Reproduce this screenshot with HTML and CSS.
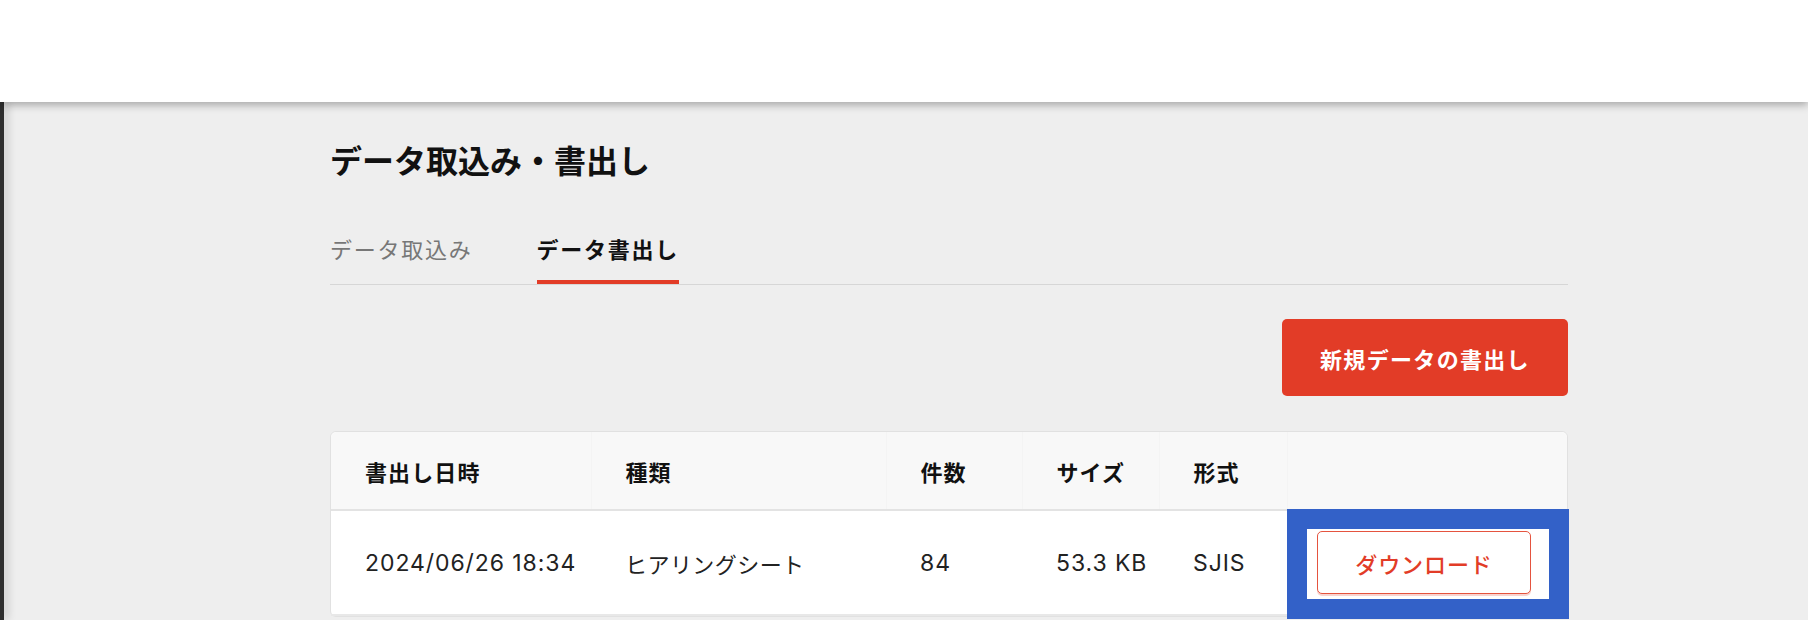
FILE: index.html
```html
<!DOCTYPE html>
<html lang="ja">
<head>
  <meta charset="UTF-8">
  <meta name="viewport" content="width=device-width, initial-scale=1.0">
  <title>データ取込み・書出し</title>
  <link rel="stylesheet" href="styles.css">
</head>
<body>
  <header class="topbar"></header>
  <div class="layout">
    <aside class="sidebar"></aside>
    <main class="main">
      <div class="content">
        <h1 class="page-title">データ取込み・書出し</h1>

        <nav class="tabs">
          <a class="tab" href="#">データ取込み</a>
          <a class="tab active" href="#">データ書出し</a>
        </nav>

        <div class="toolbar">
          <button class="btn-primary" type="button">新規データの書出し</button>
        </div>

        <div class="table-card">
          <table class="export-table">
            <colgroup>
              <col class="col-date">
              <col class="col-type">
              <col class="col-count">
              <col class="col-size">
              <col class="col-format">
              <col>
            </colgroup>
            <thead>
              <tr>
                <th>書出し日時</th>
                <th>種類</th>
                <th>件数</th>
                <th>サイズ</th>
                <th>形式</th>
                <th></th>
              </tr>
            </thead>
            <tbody>
              <tr>
                <td class="num">2024/06/26 18:34</td>
                <td>ヒアリングシート</td>
                <td class="num">84</td>
                <td class="num">53.3 KB</td>
                <td class="num">SJIS</td>
                <td class="cell-action">
                  <span class="highlight"></span>
                  <button class="btn-outline" type="button">ダウンロード</button>
                </td>
              </tr>
            </tbody>
          </table>
        </div>
      </div>
    </main>
  </div>
</body>
</html>
```

FILE: styles.css
```css
html, body {
  margin: 0;
  height: 100%;
}
body {
  font-family: "Inter", "Noto Sans CJK JP", sans-serif;
  background: #eeeeee;
  color: #1a1a1a;
  overflow: hidden;
}
.topbar {
  height: 102px;
  background: #fff;
  position: relative;
  z-index: 2;
  box-shadow: 0 3px 8px rgba(0, 0, 0, 0.3);
}
.layout {
  display: flex;
  min-height: calc(100vh - 102px);
}
.sidebar {
  width: 4px;
  flex-shrink: 0;
  background: #2e2e2e;
  box-shadow: 3px 0 8px rgba(0, 0, 0, 0.25);
}
.main {
  flex: 1;
  padding: 38px 0 0 326px;
}
.content {
  width: 1238px;
}
.page-title {
  margin: 0;
  font-size: 32px;
  line-height: 44px;
  font-weight: 700;
  color: #111;
}
.tabs {
  display: flex;
  gap: 64px;
  margin-top: 50px;
  border-bottom: 1px solid #d6d6d6;
}
.tab {
  display: block;
  font-size: 22px;
  line-height: 32px;
  letter-spacing: 0.08em;
  color: #777;
  text-decoration: none;
  padding-bottom: 14px;
  border-bottom: 4px solid transparent;
}
.tab.active {
  color: #111;
  font-weight: 700;
  border-bottom-color: #e23c27;
}
.toolbar {
  display: flex;
  justify-content: flex-end;
  margin-top: 34px;
}
.btn-primary {
  width: 286px;
  height: 77px;
  background: #e23c27;
  color: #fff;
  border: none;
  border-radius: 5px;
  font-family: inherit;
  font-size: 22px;
  font-weight: 700;
  letter-spacing: 0.06em;
  cursor: pointer;
}
.table-card {
  margin-top: 35px;
  background: #fff;
  border: 1px solid #e1e1e1;
  border-radius: 6px;
}
.export-table {
  width: 100%;
  border-collapse: collapse;
  table-layout: fixed;
}
.col-date { width: 260px; }
.col-type { width: 295px; }
.col-count { width: 136px; }
.col-size { width: 137px; }
.col-format { width: 128px; }
.export-table th,
.export-table td {
  text-align: left;
  padding: 0 0 0 34px;
  font-size: 22px;
  letter-spacing: 0.05em;
}
.export-table th {
  height: 77px;
  background: #f8f8f8;
  font-weight: 700;
  color: #111;
  border-bottom: 2px solid #e3e3e3;
}
.export-table th + th {
  border-left: 1px solid #f4f4f4;
}
.export-table th:first-child {
  border-top-left-radius: 6px;
}
.export-table th:last-child {
  border-top-right-radius: 6px;
}
.export-table td {
  color: #222;
  border-bottom: 2px solid #e8e8e8;
  letter-spacing: 0.02em;
}
.export-table td.num {
  font-size: 23px;
  letter-spacing: 0.04em;
}
.export-table td.cell-action {
  position: relative;
  padding: 20px 0 20px 30px;
}
.highlight {
  position: absolute;
  left: 0;
  top: -2px;
  width: 282px;
  height: 110px;
  box-sizing: border-box;
  border: 20px solid #3361c8;
  background: #fff;
}
.btn-outline {
  position: relative;
  display: block;
  width: 214px;
  height: 63px;
  background: #fff;
  color: #e23c27;
  border: 1px solid #e5543f;
  border-radius: 5px;
  box-shadow: 0 2px 0 rgba(229, 84, 63, 0.25);
  font-family: inherit;
  font-size: 22px;
  font-weight: 500;
  letter-spacing: 0.04em;
  cursor: pointer;
}
```
